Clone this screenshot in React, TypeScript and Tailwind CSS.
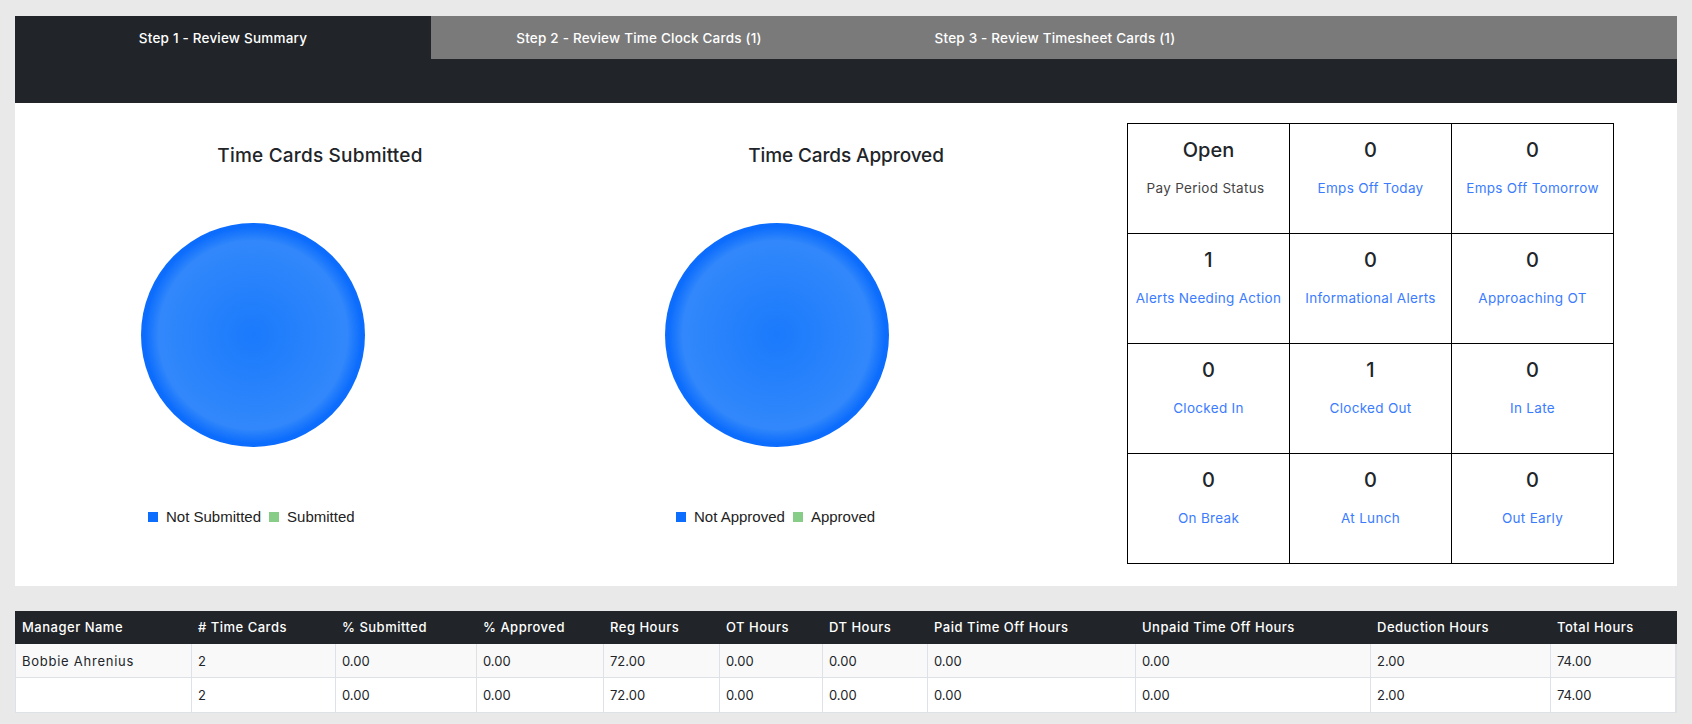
const cols = [
  ["Manager Name", "w-[176px]", "Bobbie Ahrenius", ""],
  ["# Time Cards", "w-[144px]", "2", "2"],
  ["% Submitted", "w-[141px]", "0.00", "0.00"],
  ["% Approved", "w-[127px]", "0.00", "0.00"],
  ["Reg Hours", "w-[116px]", "72.00", "72.00"],
  ["OT Hours", "w-[103px]", "0.00", "0.00"],
  ["DT Hours", "w-[105px]", "0.00", "0.00"],
  ["Paid Time Off Hours", "w-[208px]", "0.00", "0.00"],
  ["Unpaid Time Off Hours", "w-[235px]", "0.00", "0.00"],
  ["Deduction Hours", "w-[180px]", "2.00", "2.00"],
  ["Total Hours", "flex-1", "74.00", "74.00"],
];

const stats = [
  ["Open", "Pay Period Status", false],
  ["0", "Emps Off Today", true],
  ["0", "Emps Off Tomorrow", true],
  ["1", "Alerts Needing Action", true],
  ["0", "Informational Alerts", true],
  ["0", "Approaching OT", true],
  ["0", "Clocked In", true],
  ["1", "Clocked Out", true],
  ["0", "In Late", true],
  ["0", "On Break", true],
  ["0", "At Lunch", true],
  ["0", "Out Early", true],
] as const;

function Pie({ title, a, b, ml, lw, tt }: { title: string; a: string; b: string; ml: string; lw: string; tt: string }) {
  return (
    <div className="flex w-[526px] flex-col pt-[41px]">
      <div className={`text-center text-[19px] font-medium leading-[24px] text-[#212529] ${tt}`}>{title}</div>
      <div className={`mt-[55px] h-[224px] w-[224px] rounded-full bg-[radial-gradient(closest-side,#1a7afc_0%,#3288fb_84%,#0b6cfd_97%)] ${ml}`} />
      <div className={`mt-[61px] flex items-center font-['Liberation_Sans',sans-serif] text-[15px] leading-[18px] text-[#222] ${lw}`}>
        <span className="mr-[8px] h-[10px] w-[10px] bg-[#0d6efd]" />
        <span>{a}</span>
        <span className="ml-[8px] mr-[8px] h-[10px] w-[10px] bg-[#87cd87]" />
        <span>{b}</span>
      </div>
    </div>
  );
}

export default function App() {
  return (
    <div className="h-[724px] overflow-hidden bg-[#e9e9e9] px-[15px] pt-[16px] font-['Inter',sans-serif]">
      <div className="h-[87px] bg-[#212529]">
        <div className="flex h-[43px] bg-[#7a7a7a] text-[13.5px] font-medium leading-[45px] tracking-[0.2px] text-white">
          <div className="w-[416px] bg-[#212529] text-center">Step 1 - Review Summary</div>
          <div className="w-[416px] text-center">Step 2 - Review Time Clock Cards (1)</div>
          <div className="w-[416px] text-center">Step 3 - Review Timesheet Cards (1)</div>
        </div>
      </div>
      <div className="flex h-[483px] bg-white pl-[42px]">
        <Pie title="Time Cards Submitted" a="Not Submitted" b="Submitted" ml="ml-[84px]" lw="ml-[91px]" tt="tracking-[0.2px]" />
        <Pie title="Time Cards Approved" a="Not Approved" b="Approved" ml="ml-[82px]" lw="ml-[93px]" tt="tracking-[-0.1px]" />
        <div className="ml-[18px] mt-[20px] grid h-[441px] w-[487px] grid-cols-[repeat(3,162px)] grid-rows-[repeat(4,110px)] border-t border-l border-black">
          {stats.map(([v, l, link]) => (
            <div key={l} className="flex flex-col items-center border-r border-b border-black pt-[11px]">
              <div className="text-[20px] font-medium leading-[30px] text-[#212529]">{v}</div>
              <div className={`mt-[13px] text-[13.5px] leading-[20px] tracking-[0.3px] ${link ? "text-[#3b7cff]" : "mr-[6px] text-[#444]"}`}>{l}</div>
            </div>
          ))}
        </div>
      </div>
      <div className="mt-[25px] flex border-x border-b border-[#dee2e6] text-[13px]">
        {cols.map(([h, w, r1, r2]) => (
          <div key={h} className={w}>
            <div className="-mx-px h-[33px] bg-[#212529] px-[7px] font-medium leading-[33px] tracking-[0.5px] text-white">{h}</div>
            <div className={`h-[34px] border-r border-b border-[#dee2e6] bg-[#f9f9f9] px-[6px] leading-[34px] text-[#212529] ${r2 === "" ? "tracking-[0.75px]" : ""}`}>{r1}</div>
            <div className="h-[34px] border-r border-[#dee2e6] bg-white px-[6px] leading-[34px] text-[#212529]">{r2}</div>
          </div>
        ))}
      </div>
    </div>
  );
}
